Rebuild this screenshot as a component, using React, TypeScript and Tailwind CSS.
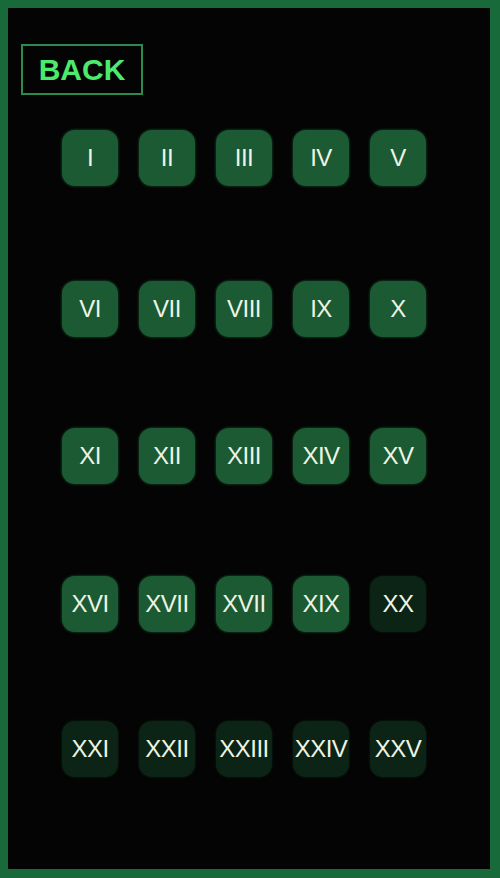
const numerals = [
  "I", "II", "III", "IV", "V",
  "VI", "VII", "VIII", "IX", "X",
  "XI", "XII", "XIII", "XIV", "XV",
  "XVI", "XVII", "XVII", "XIX", "XX",
  "XXI", "XXII", "XXIII", "XXIV", "XXV",
];

// levels past this index are still locked (dim tiles)
const UNLOCKED = 19;

const rowSpacing = ["mt-[35px]", "mt-[95px]", "mt-[91px]", "mt-[92px]", "mt-[89px]"];

const LevelTile = ({ label, locked }: { label: string; locked: boolean }) => (
  <button
    className={`flex h-[56px] w-[56px] items-center justify-center overflow-hidden rounded-[13px] text-[24px] leading-none tracking-[-0.5px] text-[#eef4e4] ${
      locked
        ? "bg-[#0c2415] shadow-[0_0_3px_#0c2415]"
        : "bg-[#1b5a33] shadow-[0_0_3px_#1b5a33]"
    }`}
  >
    {label}
  </button>
);

export default function App() {
  const rows = [0, 1, 2, 3, 4].map((r) => numerals.slice(r * 5, r * 5 + 5));

  return (
    <div
      className="h-[878px] w-[500px] bg-[#186a3b] pb-[9px] pl-[8px] pr-[10px] pt-[8px]"
      style={{ fontFamily: '"Liberation Sans", Arial, sans-serif' }}
    >
      <div className="flex h-full w-full flex-col bg-[#040404]">
        <div className="pl-[13px] pt-[36px]">
          <button className="flex h-[51px] w-[122px] items-center justify-center border-2 border-[#2b8a50] text-[30px] font-bold leading-none text-[#4cea6c]">
            BACK
          </button>
        </div>
        <div className="flex flex-col pl-[54px]">
          {rows.map((row, r) => (
            <div key={r} className={`flex gap-[21px] ${rowSpacing[r]}`}>
              {row.map((label, c) => (
                <LevelTile
                  key={c}
                  label={label}
                  locked={r * 5 + c >= UNLOCKED}
                />
              ))}
            </div>
          ))}
        </div>
      </div>
    </div>
  );
}
